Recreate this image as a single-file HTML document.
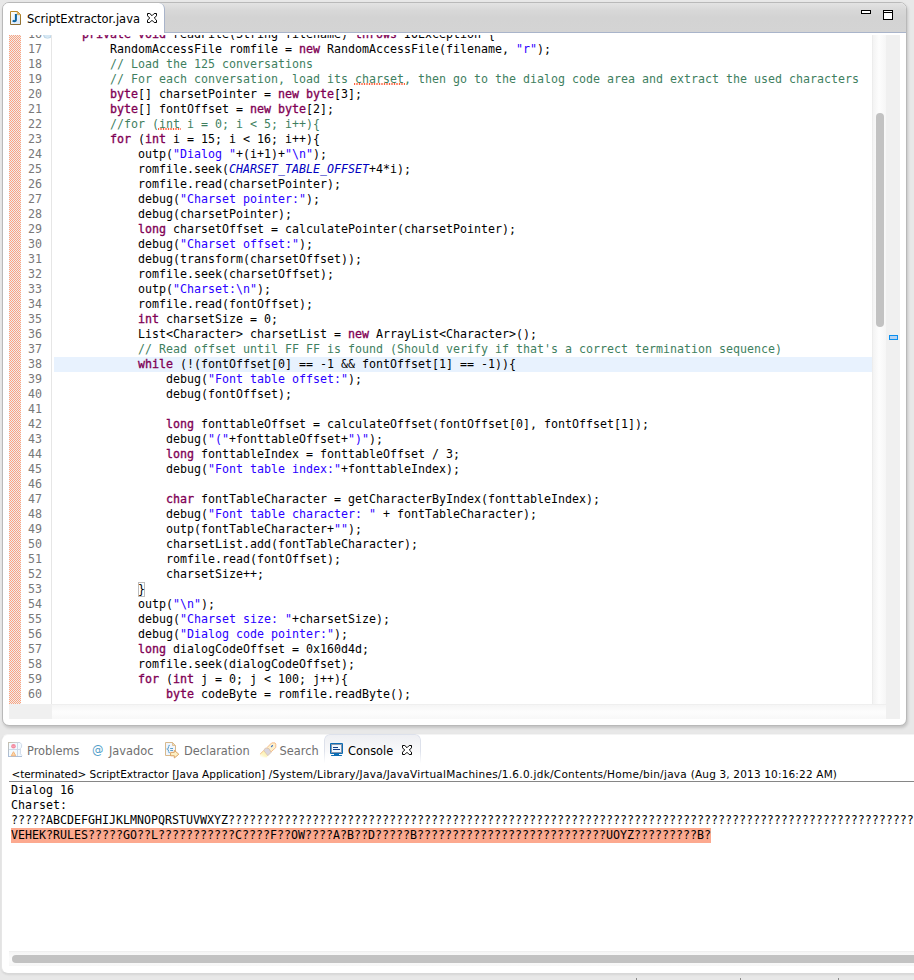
<!DOCTYPE html>
<html><head><meta charset="utf-8"><title>ScriptExtractor.java</title>
<style>
html,body{margin:0;padding:0}
body{width:914px;height:980px;overflow:hidden;background:#e8e8e8;position:relative;font-family:"DejaVu Sans","Liberation Sans",sans-serif;font-size:11.4px;color:#000}
.a{position:absolute}
#edpanel{left:2px;top:2px;width:903px;height:722px;border:1px solid #b9b9b9;border-radius:7px;background:#fff;box-shadow:1px 2px 3px rgba(0,0,0,.16)}
#edhead{left:3px;top:3px;width:903px;height:29px;background:linear-gradient(#e3e3e3,#d8d8d8 25%,#d3d3d3 50%,#d4d4d4);border-bottom:1px solid #a9b4ca;border-radius:6px 6px 0 0}
#edtab{left:3px;top:3px;width:161px;height:30px;background:#fff;border-right:1px solid #a9b4ca;border-radius:6px 6px 0 0}
.ui{white-space:nowrap;line-height:14px}
#hatch{left:9px;top:35px;width:12px;height:669px;background-color:#fff;
 background-image:conic-gradient(#eceeee 25%,#ffa27e 0 50%,#eceeee 0 75%,#ffa27e 0);background-size:2px 2px}
.mono{font-family:"DejaVu Sans Mono","Liberation Mono",monospace;font-size:11.63px;line-height:15px}
.mono>div{white-space:pre}
#nums{left:22px;top:35px;width:20px;height:669px;overflow:hidden;text-align:right;color:#787878}
#nums>div{position:relative;top:-8px;height:15px}
#sep{left:51px;top:35px;width:1px;height:669px;background:#e6e6e6}
#code{left:54px;top:35px;width:818px;height:669px;overflow:hidden;color:#000}
#code>div{position:relative;top:-8px;height:15px}
#code .cur{background:#e8f2fe}
#code b{color:#7f0055;font-weight:normal;-webkit-text-stroke:.33px #7f0055}
#code i{color:#0000c0;font-style:italic}
#code .s{color:#2a00ff}
#code .c{color:#3f7f5f}
#code u.sq{text-decoration:none;display:inline-block;height:15px;padding:0 1px;margin:0 -1px;background:linear-gradient(90deg,rgba(255,88,50,.95) 0 1px,rgba(255,88,50,.15) 1px 2px,rgba(255,88,50,.62) 2px 4px,rgba(255,88,50,.15) 4px 5px) 0 11px/5px 2px repeat-x}
#code .bm{display:inline-block;height:15px;box-shadow:inset 0 0 0 1px #bdbdbd}
#vtrack{left:872px;top:35px;width:14px;height:669px;background:linear-gradient(90deg,#e6e6e6 0,#f3f3f3 1px,#fdfdfd 7px,#f6f6f6 14px)}
#vthumb{left:876px;top:113px;width:8px;height:214px;border-radius:4px;background:#c2c2c2}
#ovr{left:886px;top:35px;width:14px;height:684px;background:#f0f0f0}
#mark{left:889px;top:335px;width:7px;height:3px;border:1px solid #0a8fef;background:#b5d3f2}
#hleft{left:9px;top:704px;width:43px;height:15px;background:#f0f0f0}
#htrack{left:52px;top:704px;width:834px;height:15px;background:linear-gradient(#e9e9e9 0,#f5f5f5 1px,#fdfdfd 8px,#f8f8f8 15px)}
#conpanel{left:1px;top:734px;width:931px;height:238px;border:1px solid #e6e6e6;border-top-color:#f4f4f4;border-bottom-color:#d8d8d8;border-radius:7px;background:#fff;box-shadow:0 1px 2px rgba(0,0,0,.08)}
#contab{left:324px;top:734px;width:95px;height:30px;border:1px solid #dde1eb;border-bottom:none;border-radius:6px 6px 0 0;background:linear-gradient(#eeeff3,#fff 85%);-webkit-mask-image:linear-gradient(#000 55%,transparent 95%);mask-image:linear-gradient(#000 55%,transparent 95%)}
.g{color:#707070}
#conline{left:9px;top:781px;width:905px;height:1px;background:#868686}
#con{left:11px;top:783px;width:903px;height:165px;overflow:hidden;color:#000}
#con>div{height:15px}
#con .hl{background:#fca98f;display:inline-block;height:15px}
#chtrack{left:9px;top:951px;width:905px;height:15px;background:linear-gradient(#e9e9e9 0,#f5f5f5 1px,#fcfcfc 8px,#f6f6f6 15px)}
#chthumb{left:12px;top:955px;width:920px;height:8px;border-radius:4px;background:#c2c2c2}
.tick{width:1px;height:2px;top:978px;background:#8a8a8a}
</style></head><body>
<div class="a" id="edpanel"></div>
<div class="a" id="edhead"></div>
<div class="a" id="edtab"></div>
<svg class="a" style="left:10px;top:11px" width="12" height="15" viewBox="0 0 12 15">
 <defs><linearGradient id="jb" x1="0" y1="0" x2="0" y2="1"><stop offset="0" stop-color="#bb8a2c"/><stop offset="1" stop-color="#8a6c32"/></linearGradient>
 <linearGradient id="jf" x1="0" y1="0" x2="1" y2="1"><stop offset="0" stop-color="#ffffff"/><stop offset="1" stop-color="#d6e6f8"/></linearGradient></defs>
 <path d="M0.5 0.5H7.5L10.5 3.5V13.5H0.5Z" fill="url(#jf)" stroke="url(#jb)"/>
 <path d="M7.3 0.7V3.7H10.3Z" fill="#e9bc66" stroke="#c6943a" stroke-width=".6"/>
 <path d="M5.9 3.1V8.6Q5.9 10.2 4.4 10.2Q3.4 10.2 2.9 9.4" fill="none" stroke="#0b639f" stroke-width="2"/>
</svg>
<div class="a ui" id="t1" style="left:27px;top:12px;font-size:11.5px">ScriptExtractor.java</div>
<svg class="a" style="left:147px;top:13px" width="10" height="10" viewBox="0 0 10 10">
 <path d="M0.5 0.5H2.8L5 2.7L7.2 0.5H9.5V2.8L7.3 5L9.5 7.2V9.5H7.2L5 7.3L2.8 9.5H0.5V7.2L2.7 5L0.5 2.8Z" fill="#fff" stroke="#000" stroke-width="1" stroke-linejoin="round"/>
</svg>
<div class="a" style="left:861px;top:10px;width:8px;height:2px;border:1px solid #000;background:#fff"></div>
<div class="a" style="left:883px;top:10px;width:8px;height:8px;border:1px solid #000;background:linear-gradient(#fff 1px,#000 1px,#000 2px,#fff 2px)"></div>

<div class="a" id="hatch"></div>
<div class="a mono" id="nums">
<div>16</div>
<div>17</div>
<div>18</div>
<div>19</div>
<div>20</div>
<div>21</div>
<div>22</div>
<div>23</div>
<div>24</div>
<div>25</div>
<div>26</div>
<div>27</div>
<div>28</div>
<div>29</div>
<div>30</div>
<div>31</div>
<div>32</div>
<div>33</div>
<div>34</div>
<div>35</div>
<div>36</div>
<div>37</div>
<div>38</div>
<div>39</div>
<div>40</div>
<div>41</div>
<div>42</div>
<div>43</div>
<div>44</div>
<div>45</div>
<div>46</div>
<div>47</div>
<div>48</div>
<div>49</div>
<div>50</div>
<div>51</div>
<div>52</div>
<div>53</div>
<div>54</div>
<div>55</div>
<div>56</div>
<div>57</div>
<div>58</div>
<div>59</div>
<div>60</div>
</div>
<div class="a" style="left:42.5px;top:29.5px;width:9px;height:9px;border-radius:5px;background:#d6e8f4;border:1px solid #b9d2e4;box-sizing:border-box;clip-path:inset(5.5px 0 0 0)"></div>
<div class="a" id="sep"></div>
<div class="a mono" id="code">
<div>    <b>private</b> <b>void</b> readFile(String filename) <b>throws</b> IOException {</div>
<div>        RandomAccessFile romfile = <b>new</b> RandomAccessFile(filename, <span class="s">&quot;r&quot;</span>);</div>
<div>        <span class="c">// Load the 125 conversations</span></div>
<div>        <span class="c">// For each conversation, load its <u class="sq">charset</u>, then go to the dialog code area and extract the used characters</span></div>
<div>        <b>byte</b>[] charsetPointer = <b>new</b> <b>byte</b>[3];</div>
<div>        <b>byte</b>[] fontOffset = <b>new</b> <b>byte</b>[2];</div>
<div>        <span class="c">//for (<u class="sq">int</u> i = 0; i &lt; 5; i++){</span></div>
<div>        <b>for</b> (<b>int</b> i = 15; i &lt; 16; i++){</div>
<div>            outp(<span class="s">&quot;Dialog &quot;</span>+(i+1)+<span class="s">&quot;\n&quot;</span>);</div>
<div>            romfile.seek(<i>CHARSET_TABLE_OFFSET</i>+4*i);</div>
<div>            romfile.read(charsetPointer);</div>
<div>            debug(<span class="s">&quot;Charset pointer:&quot;</span>);</div>
<div>            debug(charsetPointer);</div>
<div>            <b>long</b> charsetOffset = calculatePointer(charsetPointer);</div>
<div>            debug(<span class="s">&quot;Charset offset:&quot;</span>);</div>
<div>            debug(transform(charsetOffset));</div>
<div>            romfile.seek(charsetOffset);</div>
<div>            outp(<span class="s">&quot;Charset:\n&quot;</span>);</div>
<div>            romfile.read(fontOffset);</div>
<div>            <b>int</b> charsetSize = 0;</div>
<div>            List&lt;Character&gt; charsetList = <b>new</b> ArrayList&lt;Character&gt;();</div>
<div>            <span class="c">// Read offset until FF FF is found (Should verify if that&#x27;s a correct termination sequence)</span></div>
<div class="cur">            <b>while</b> (!(fontOffset[0] == -1 &amp;&amp; fontOffset[1] == -1)){</div>
<div>                debug(<span class="s">&quot;Font table offset:&quot;</span>);</div>
<div>                debug(fontOffset);</div>
<div>&nbsp;</div>
<div>                <b>long</b> fonttableOffset = calculateOffset(fontOffset[0], fontOffset[1]);</div>
<div>                debug(<span class="s">&quot;(&quot;</span>+fonttableOffset+<span class="s">&quot;)&quot;</span>);</div>
<div>                <b>long</b> fonttableIndex = fonttableOffset / 3;</div>
<div>                debug(<span class="s">&quot;Font table index:&quot;</span>+fonttableIndex);</div>
<div>&nbsp;</div>
<div>                <b>char</b> fontTableCharacter = getCharacterByIndex(fonttableIndex);</div>
<div>                debug(<span class="s">&quot;Font table character: &quot;</span> + fontTableCharacter);</div>
<div>                outp(fontTableCharacter+<span class="s">&quot;&quot;</span>);</div>
<div>                charsetList.add(fontTableCharacter);</div>
<div>                romfile.read(fontOffset);</div>
<div>                charsetSize++;</div>
<div>            <span class="bm">}</span></div>
<div>            outp(<span class="s">&quot;\n&quot;</span>);</div>
<div>            debug(<span class="s">&quot;Charset size: &quot;</span>+charsetSize);</div>
<div>            debug(<span class="s">&quot;Dialog code pointer:&quot;</span>);</div>
<div>            <b>long</b> dialogCodeOffset = 0x160d4d;</div>
<div>            romfile.seek(dialogCodeOffset);</div>
<div>            <b>for</b> (<b>int</b> j = 0; j &lt; 100; j++){</div>
<div>                <b>byte</b> codeByte = romfile.readByte();</div>
</div>
<div class="a" id="vtrack"></div>
<div class="a" id="vthumb"></div>
<div class="a" id="ovr"></div>
<div class="a" id="mark"></div>
<div class="a" id="hleft"></div>
<div class="a" id="htrack"></div>

<div class="a" id="conpanel"></div>
<div class="a" id="contab"></div>

<svg class="a" style="left:8px;top:742px" width="15" height="16" viewBox="0 0 15 16">
 <defs><linearGradient id="pt" gradientUnits="userSpaceOnUse" x1="0" y1="0" x2="12" y2="0"><stop offset="0" stop-color="#c9bfa4"/><stop offset="1" stop-color="#cbd6e6"/></linearGradient>
 <linearGradient id="pl" gradientUnits="userSpaceOnUse" x1="0" y1="0" x2="0" y2="15"><stop offset="0" stop-color="#c6c0b0"/><stop offset="1" stop-color="#a9bcd8"/></linearGradient></defs>
 <path d="M0.5 0.5H12L13.6 2.4V5.2L12.4 6.5V11.8L14 13.6V14.5H0.5Z" fill="#f2faff" stroke="none"/>
 <path d="M12 0.5L13.6 2.4V5.2L12.4 6.5V11.8L14 13.6" fill="none" stroke="#cfdaea" stroke-width="1"/>
 <path d="M0.5 0.5H12" fill="none" stroke="url(#pt)" stroke-width="1"/>
 <path d="M0.5 0V15" fill="none" stroke="url(#pl)" stroke-width="1"/>
 <path d="M0.5 14.5H14" fill="none" stroke="#adbfd8" stroke-width="1"/>
 <path d="M9.5 1V14M1 7.5H12" fill="none" stroke="#cdd8e8" stroke-width="1"/>
 <circle cx="5.5" cy="4.3" r="2.3" fill="#f3899f"/>
 <path d="M3.6 4.3H7.4" stroke="#f9b4c2" stroke-width=".8"/>
 <path d="M5.5 9.7L7.8 13.8H3.2Z" fill="#fbd6aa" stroke="#f3b174" stroke-width=".9" stroke-linejoin="round"/>
</svg>
<svg class="a" style="left:165px;top:742px" width="15" height="17" viewBox="0 0 15 17">
 <path d="M0.5 0.5H7.5L10.5 3.5V13.5H0.5Z" fill="#f1f6fd" stroke="#d8b98c"/>
 <path d="M7.5 0.5V3.5H10.5Z" fill="#f3dcb4" stroke="#d8b98c" stroke-width=".8"/>
 <path d="M4.6 3.2L3.4 4.4V6L2.2 6.9L3.4 7.8V9.6L4.6 10.8" fill="none" stroke="#4e97c6" stroke-width="1.1" stroke-dasharray="1.6 .5" opacity=".9"/>
 <path d="M5.2 6.5H8M5.2 8.5H8" stroke="#5c9fcc" stroke-width="1"/>
 <path d="M5.6 10.4H9.3V8.4L13.8 12.2L9.3 16V13.8H5.6Z" fill="#fdf0c4" stroke="#dba468" stroke-width="1" stroke-linejoin="round"/>
</svg>
<svg class="a" style="left:259px;top:742px" width="19" height="17" viewBox="0 0 19 17">
 <defs><linearGradient id="bm" gradientUnits="userSpaceOnUse" x1="7" y1="9" x2="3" y2="16"><stop offset="0" stop-color="#fdf0a8"/><stop offset=".6" stop-color="#fdf3b8" stop-opacity=".8"/><stop offset="1" stop-color="#fdf3b8" stop-opacity="0"/></linearGradient></defs>
 <path d="M4.8 8.5L8.8 13.7L7.6 15.4H0.8V12.2Z" fill="url(#bm)"/>
 <path d="M1.1 12.1L4.8 8.5" stroke="#f7c08e" stroke-width="1"/>
 <path d="M8.1 5.5L12.7 0.9H16L16.8 2.2V5.5L12.1 9.8Z" fill="#fdf0cc" stroke="#f6bd8a" stroke-width="1" stroke-linejoin="round"/>
 <path d="M6.2 6.2L9.8 6.5L12.1 10.4L8.8 13.7L4.8 8.5Z" fill="#dad6de" stroke="#dcc2a8" stroke-width=".8" stroke-linejoin="round"/>
 <path d="M12.5 4.6L13.4 3.6" stroke="#3f74c6" stroke-width="1.3" stroke-linecap="round"/>
</svg>
<svg class="a" style="left:330px;top:743px" width="13" height="13" viewBox="0 0 13 13">
 <rect x="0" y="0" width="13" height="11" rx="1" fill="#0a6cb4"/>
 <rect x="1" y="1" width="11" height="9" fill="#8a96ac"/>
 <rect x="2" y="2" width="9" height="7" fill="#eef8ff"/>
 <path d="M3 4.5H8M3 6.5H10" stroke="#173f86" stroke-width="1"/>
 <rect x="4" y="11" width="5" height="1" fill="#0a6cb4"/>
 <rect x="1" y="12" width="11" height="1" rx=".5" fill="#0a6cb4"/>
</svg>
<div class="a ui g" id="t2" style="left:27px;top:744px">Problems</div>
<div class="a ui" id="t3a" style="left:92px;top:743px;color:#4f9dc8">@</div>
<div class="a ui g" id="t3" style="left:109px;top:744px">Javadoc</div>
<div class="a ui g" id="t4" style="left:184px;top:744px">Declaration</div>
<div class="a ui g" id="t5" style="left:279.5px;top:744px">Search</div>
<div class="a ui" id="t6" style="left:348px;top:744px">Console</div>
<svg class="a" style="left:402px;top:745px" width="10" height="10" viewBox="0 0 10 10">
 <path d="M0.5 0.5H2.8L5 2.7L7.2 0.5H9.5V2.8L7.3 5L9.5 7.2V9.5H7.2L5 7.3L2.8 9.5H0.5V7.2L2.7 5L0.5 2.8Z" fill="#fff" stroke="#000" stroke-width="1" stroke-linejoin="round"/>
</svg>
<div class="a ui" id="t7" style="left:11.5px;top:767px;font-size:10.5px"><span id="s1" style="letter-spacing:-.085px">&lt;terminated&gt; </span><span id="s2" style="letter-spacing:.03px">ScriptExtractor </span><span id="s3" style="letter-spacing:.04px">[Java Application] </span><span id="s4" style="letter-spacing:.28px">/System/Library/Java/JavaVirtualMachines/1.6.0.jdk/Contents/Home/bin/java </span><span id="s5" style="letter-spacing:.17px">(Aug 3, 2013 10:16:22 AM)</span></div>
<div class="a" id="conline"></div>
<div class="a mono" id="con">
<div>Dialog 16</div>
<div>Charset:</div>
<div>?????ABCDEFGHIJKLMNOPQRSTUVWXYZ???????????????????????????????????????????????????????????????????????????????????????????????????????</div>
<div><span class="hl">VEHEK?RULES?????GO??L???????????C????F??OW????A?B??D?????B???????????????????????????UOYZ?????????B?</span></div>
</div>
<div class="a" id="chtrack"></div>
<div class="a" id="chthumb"></div>
<div class="a tick" style="left:636px"></div>
<div class="a tick" style="left:740px"></div>
<div class="a tick" style="left:838px"></div>
</body></html>
